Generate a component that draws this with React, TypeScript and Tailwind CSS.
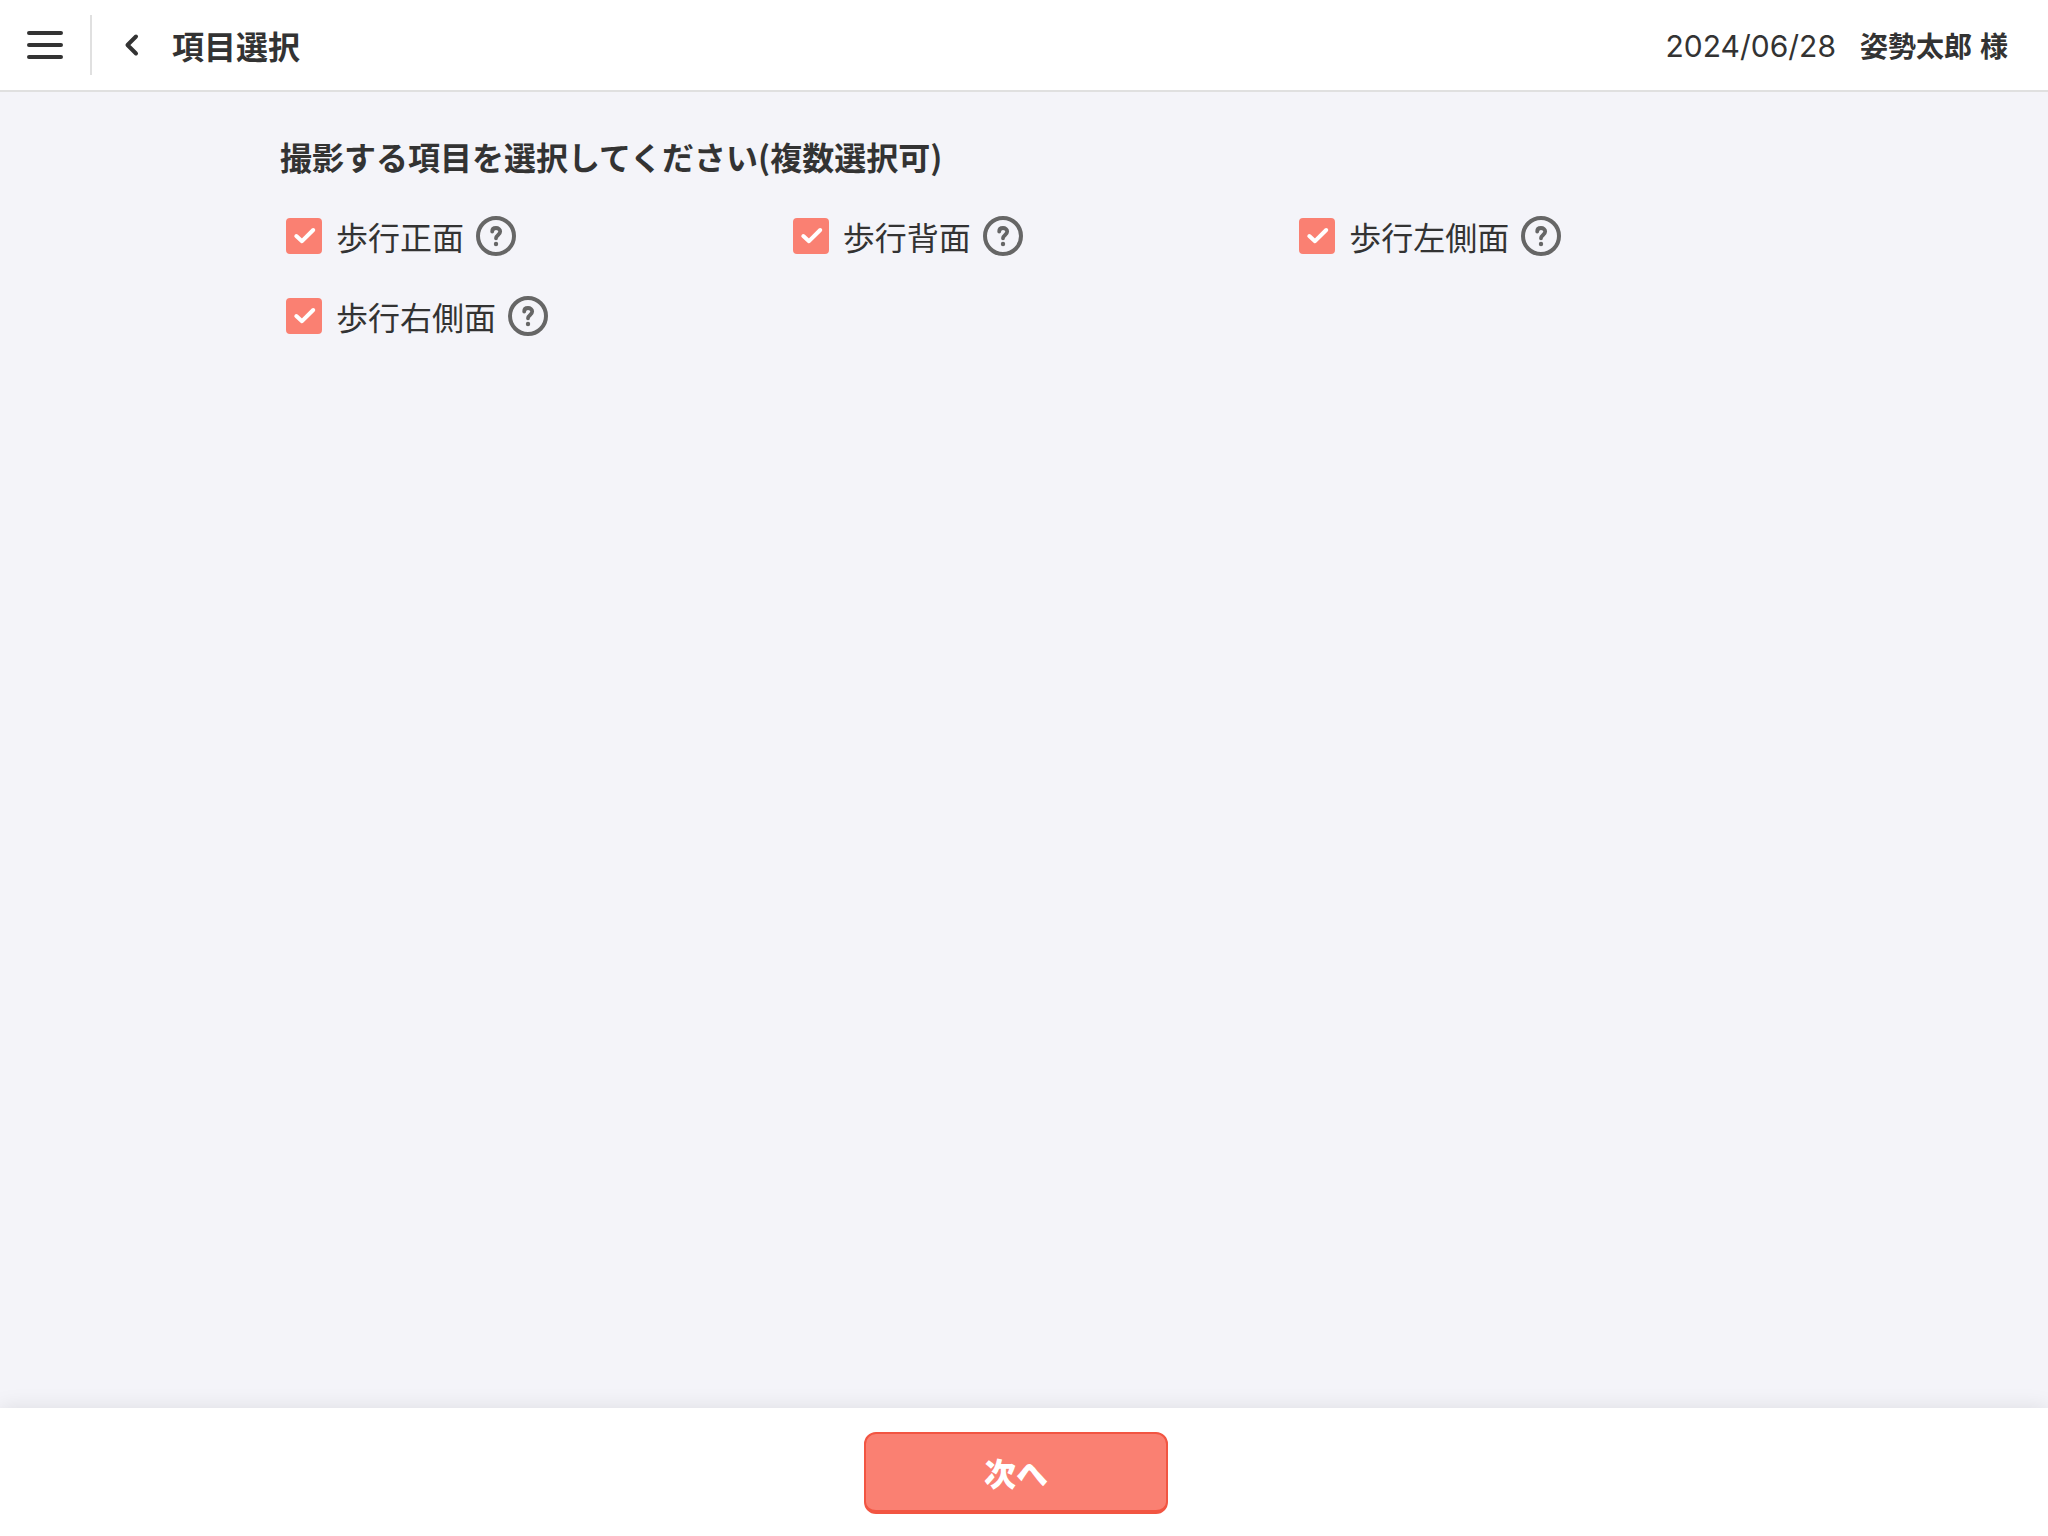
import { useState } from "react";

const ITEMS = [
  { id: "front", label: "歩行正面" },
  { id: "back", label: "歩行背面" },
  { id: "left", label: "歩行左側面" },
  { id: "right", label: "歩行右側面" },
];

function MenuIcon() {
  return (
    <svg className="size-9" viewBox="0 0 36 36" fill="none" stroke="currentColor" strokeWidth="4" strokeLinecap="round" aria-hidden="true">
      <path d="M2 6h32M2 18h32M2 30h32" />
    </svg>
  );
}

function BackIcon() {
  return (
    <svg className="h-6 w-4" viewBox="0 0 16 24" fill="none" stroke="currentColor" strokeWidth="4" strokeLinecap="round" strokeLinejoin="round" aria-hidden="true">
      <path d="M12 3.5L3.5 12l8.500 8.500" />
    </svg>
  );
}

function CheckIcon() {
  return (
    <svg className="pointer-events-none col-start-1 row-start-1 size-9 text-white" viewBox="0 0 36 36" fill="none" stroke="currentColor" strokeWidth="4" strokeLinecap="round" strokeLinejoin="round" aria-hidden="true">
      <path d="M10.300 18L16 23.200L27.200 12" />
    </svg>
  );
}

function HelpIcon() {
  return (
    <svg className="size-10" viewBox="0 0 40 40" fill="none" stroke="currentColor" aria-hidden="true">
      <circle cx="20" cy="20" r="18" strokeWidth="4" />
      <path d="M16.200 15.500C16.200 13 17.800 12 20 12s4.200 1.400 4.200 3.600c0 3.200-4.200 3.600-4.200 6.700" strokeWidth="3.800" strokeLinecap="round" />
      <circle cx="20" cy="28" r="2.200" fill="currentColor" stroke="none" />
    </svg>
  );
}

function CheckItem({ id, label }: { id: string; label: string }) {
  const [checked, setChecked] = useState(true);
  return (
    <li className="flex h-20 items-center pl-[30px]">
      <span className="grid">
        <input
          id={id}
          type="checkbox"
          checked={checked}
          onChange={(e) => setChecked(e.target.checked)}
          className="col-start-1 row-start-1 size-9 appearance-none rounded border-2 border-[#fa8072] bg-white checked:bg-[#fa8072]"
        />
        {checked && <CheckIcon />}
      </span>
      <label htmlFor={id} className="pl-[14px] text-[32px] leading-10">
        {label}
      </label>
      <button type="button" aria-label={`${label}の説明`} className="ml-3 text-[#666666]">
        <HelpIcon />
      </button>
    </li>
  );
}

export default function App() {
  return (
    <div className="flex min-h-screen flex-col bg-[#f4f4f9] font-['Noto_Sans_CJK_JP',sans-serif] text-[#333333]">
      <header className="flex h-23 items-center border-b-2 border-[#e0e0e0] bg-white pr-10">
        <button type="button" aria-label="メニュー" className="flex w-[90px] justify-center">
          <MenuIcon />
        </button>
        <span className="h-15 w-0.5 bg-[#e0e0e0]" />
        <button type="button" aria-label="戻る" className="ml-8">
          <BackIcon />
        </button>
        <h1 className="ml-8 text-[32px] leading-10 font-bold">項目選択</h1>
        <div className="ml-auto flex items-center gap-6 text-[28px] leading-10">
          <time dateTime="2024-06-28" className="pt-0.5 font-['Inter',sans-serif] text-[30px]">2024/06/28</time>
          <span className="flex gap-2 font-bold">
            <span>姿勢太郎</span>
            <span>様</span>
          </span>
        </div>
      </header>

      <main className="grow pt-10 pr-4">
        <div className="mx-auto max-w-[1520px]">
          <h2 className="px-6 pt-1 text-[32px] leading-10 font-bold">撮影する項目を選択してください(複数選択可)</h2>
          <ul className="mt-5 grid grid-cols-3">
            {ITEMS.map((item) => (
              <CheckItem key={item.id} id={item.id} label={item.label} />
            ))}
          </ul>
        </div>
      </main>

      <footer className="flex h-32 justify-center bg-white pt-6 pr-4 shadow-[0_0_20px_rgba(0,0,0,0.1)]">
        <button
          type="button"
          className="h-[82px] w-[304px] rounded-xl border-2 border-b-4 border-[#f25542] bg-[#fa8072] text-[32px] leading-10 font-black text-white"
        >
          次へ
        </button>
      </footer>
    </div>
  );
}
